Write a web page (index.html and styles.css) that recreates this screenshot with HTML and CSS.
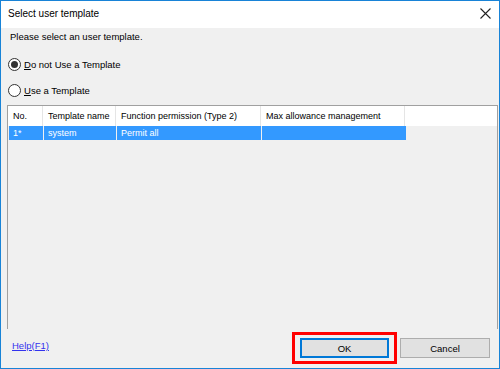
FILE: index.html
```html
<!DOCTYPE html>
<html lang="en">
<head>
    <meta charset="UTF-8">
    <title>Select user template</title>
    <link rel="stylesheet" href="styles.css">
</head>
<body>

<div class="dialog">
    <!-- Title bar -->
    <div class="title-bar">
        <span class="title">Select user template</span>
        <svg class="close-icon" width="11" height="11" viewBox="0 0 11 11">
            <path d="M0.5 0.5 L10.5 10.5 M10.5 0.5 L0.5 10.5" stroke="#222" stroke-width="1.1" fill="none"/>
        </svg>
    </div>

    <div class="content">
        <p class="intro">Please select an user template.</p>

        <label class="radio-row first">
            <span class="radio checked"></span>
            <span><u>D</u>o not Use a Template</span>
        </label>
        <label class="radio-row">
            <span class="radio"></span>
            <span><u>U</u>se a Template</span>
        </label>

        <!-- Template list -->
        <div class="list-view">
            <div class="list-header">
                <div class="col">No.</div>
                <div class="col">Template name</div>
                <div class="col">Function permission (Type 2)</div>
                <div class="col">Max allowance management</div>
            </div>
            <div class="list-row selected">
                <div class="col">1*</div>
                <div class="col">system</div>
                <div class="col">Permit all</div>
                <div class="col"></div>
            </div>
        </div>

        <div class="footer">
            <a class="help-link" href="#">Help(F1)</a>
            <div class="buttons">
                <div class="highlight">
                    <button class="btn default">OK</button>
                </div>
                <button class="btn">Cancel</button>
            </div>
        </div>
    </div>
</div>

</body>
</html>
```

FILE: styles.css
```css
body {
    margin: 0;
    font-family: "Liberation Sans", Arial, sans-serif;
    font-size: 9.5px;
    color: #000;
    background: #fff;
}

.dialog {
    width: 500px;
    height: 369px;
    box-sizing: border-box;
    border: 1px solid #1883d7;
    display: flex;
    flex-direction: column;
    background: #f0f0f0;
}

.title-bar {
    height: 25px;
    background: #fff;
    display: flex;
    align-items: center;
    justify-content: space-between;
    padding: 0 8px 2px 7px;
}

.title {
    font-size: 10px;
    color: #000;
}

.close-icon {
    margin-right: 0;
}

.content {
    flex: 1;
    display: flex;
    flex-direction: column;
    padding: 0 1px 0 6px;
}

.intro {
    margin: 0;
    height: 16px;
    line-height: 17px;
    padding-left: 3px;
}

.radio-row {
    display: flex;
    align-items: center;
    gap: 3px;
    height: 16px;
    margin-top: 10px;
    padding-left: 1px;
}

.radio-row.first {
    margin-top: 12px;
}

.radio {
    width: 11px;
    height: 11px;
    border: 1px solid #333;
    border-radius: 50%;
    background: #fff;
    display: flex;
    align-items: center;
    justify-content: center;
}

.radio.checked::after {
    content: "";
    width: 7px;
    height: 7px;
    border-radius: 50%;
    background: #333;
}

.list-view {
    margin-top: 7px;
    height: 224px;
    box-sizing: border-box;
    border-left: 1px solid #a0a0a0;
    border-top: 1px solid #a0a0a0;
    border-right: 1px solid #a0a0a0;
    font-size: 9px;
}

.list-header,
.list-row {
    display: grid;
    grid-template-columns: 35px 73px 145px 144px;
}

.list-header {
    height: 20px;
    background: #fff;
    align-items: center;
}

.list-header .col {
    height: 20px;
    line-height: 20px;
    padding-left: 5px;
    border-right: 1px solid #e5e5e5;
    box-sizing: border-box;
}

.list-row {
    height: 14px;
    margin-left: 1px;
}

.list-row .col {
    line-height: 14px;
    padding-left: 4px;
    border-right: 1px solid #f0f0f0;
}

.list-row .col:last-child {
    border-right: none;
}

.list-row.selected .col {
    background: #3399ff;
    color: #fff;
}

.footer {
    flex: 1;
    display: flex;
    justify-content: space-between;
    align-items: flex-start;
    padding: 9px 8px 0 5px;
}

.help-link {
    color: #3333ee;
    margin-top: 1px;
    line-height: 14px;
    text-decoration: underline;
}

.buttons {
    display: flex;
    align-items: center;
    gap: 3px;
    margin-top: -6px;
}

.highlight {
    border: 3px solid #ff0000;
    padding: 3px 5px;
}

.btn {
    width: 90px;
    height: 20px;
    font-family: "Liberation Sans", Arial, sans-serif;
    font-size: 9.5px;
    background: #e1e1e1;
    border: 1px solid #adadad;
    color: #000;
    padding: 0;
}

.btn.default {
    width: 89px;
    border: 2px solid #0078d7;
}
```
